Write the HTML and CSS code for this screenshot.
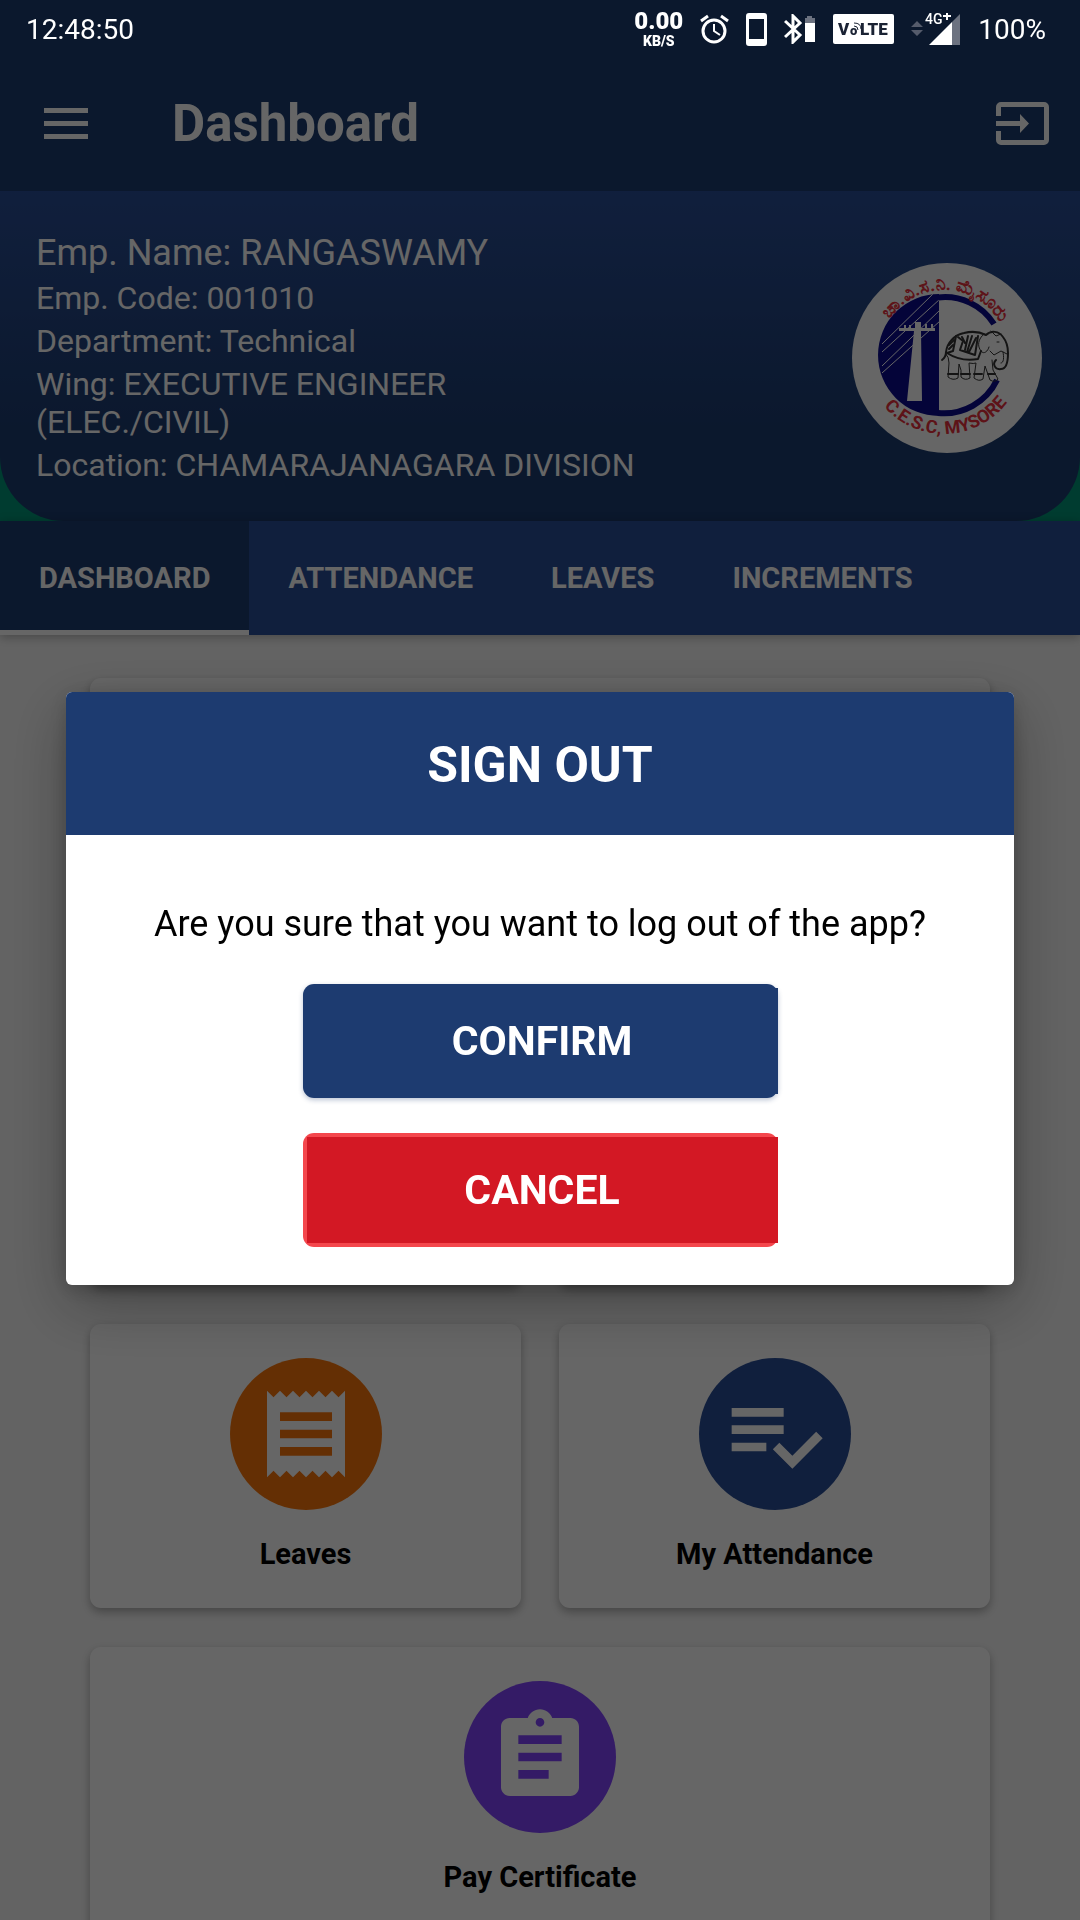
FILE: index.html
```html
<!DOCTYPE html>
<html lang="en">
<head>
    <meta charset="UTF-8">
    <meta name="viewport" content="width=device-width, initial-scale=1.0">
    <title>Dashboard</title>
    <link rel="stylesheet" href="styles.css">
</head>
<body>
    <div class="status-bar">
        <span class="clock">12:48:50</span>
        <div class="status-icons">
            <div class="speed"><span class="speed-value">0.00</span><span class="speed-unit">KB/S</span></div>
            <svg class="alarm" width="29" height="30" viewBox="0 0 29 30" fill="none" stroke="#fff">
                <circle cx="14" cy="17" r="11" stroke-width="3"/>
                <path d="M14 10v7l6 4" stroke-width="2"/>
                <path d="M1 7l7-5M21 2l7 5" stroke-width="3"/>
            </svg>
            <svg width="21" height="33" viewBox="0 0 21 33">
                <path fill="#fff" fill-rule="evenodd" d="M3 0h15a3 3 0 0 1 3 3v27a3 3 0 0 1-3 3H3a3 3 0 0 1-3-3V3a3 3 0 0 1 3-3zm0 6v20h15V6z"/>
            </svg>
            <svg width="32" height="30" viewBox="0 0 32 30">
                <path d="M1 7l15 14-7 7V2l7 7L1 23" fill="none" stroke="#fff" stroke-width="3"/>
                <path fill="#6c7280" d="M23 2h5v2h3v5H21V4h2z"/>
                <path fill="#fff" d="M21 9h10v19H21z"/>
            </svg>
            <svg width="61" height="30" viewBox="0 0 61 30">
                <rect width="61" height="30" rx="2" fill="#fff"/>
                <g fill="#1a2233" font-family="Roboto, sans-serif" font-weight="900">
                    <text x="5" y="21" font-size="17">V</text>
                    <text x="17" y="21" font-size="13">o</text>
                    <text x="27" y="21" font-size="17">LTE</text>
                </g>
                <path d="M21 12q4 0 4 4M21 9q7 0 7 6" fill="none" stroke="#1a2233" stroke-width="1"/>
            </svg>
            <svg width="50" height="34" viewBox="0 0 50 34">
                <path fill="#555b6b" d="M6 9l6 6H0zM6 24l-6-6h12z"/>
                <path fill="#6c7280" d="M49 2v31h-8V10z"/>
                <path fill="#fff" d="M41 10v23H18z"/>
                <path d="M12 0h26v11l-7 5H12z" fill="#0b182d"/>
                <text x="14" y="12" font-size="14" font-weight="500" fill="#fff" font-family="Roboto, sans-serif">4G</text>
                <path d="M36 1v7M32 4h8" stroke="#fff" stroke-width="2"/>
            </svg>
            <span>100%</span>
        </div>
    </div>

    <div class="app">
        <header class="toolbar">
            <button class="icon-button" aria-label="Menu">
                <svg width="44" height="32" viewBox="0 0 44 32" fill="#fff"><path d="M0 0h44v5H0zM0 13h44v5H0zM0 26h44v5H0z"/></svg>
            </button>
            <h1 class="title">Dashboard</h1>
            <button class="icon-button logout" aria-label="Sign out">
                <svg width="53" height="43" viewBox="0 0 53 43">
                    <path d="M2.500 14V5a2.500 2.500 0 0 1 2.500-2.500h43A2.500 2.500 0 0 1 50.500 5v33a2.500 2.500 0 0 1-2.500 2.500H5A2.500 2.500 0 0 1 2.500 38v-9" fill="none" stroke="#fff" stroke-width="5"/>
                    <path d="M0 19h24v-7l9 9.500-9 9.500v-7H0z" fill="#fff"/>
                </svg>
            </button>
        </header>

        <div class="profile-wrap">
            <section class="profile">
                <div class="info">
                    <p class="name">Emp. Name: RANGASWAMY</p>
                    <p>Emp. Code: 001010</p>
                    <p>Department: Technical</p>
                    <p>Wing: EXECUTIVE ENGINEER (ELEC./CIVIL)</p>
                    <p>Location: CHAMARAJANAGARA DIVISION</p>
                </div>
                <svg class="logo" width="190" height="190" viewBox="0 0 190 190">
                    <defs>
                        <path id="arc-top" d="M27 92A65 65 0 0 1 157 92"/>
                        <path id="arc-bottom" d="M13 92A79 79 0 0 0 171 92"/>
                        <clipPath id="half"><path d="M87 31A61 61 0 0 0 87 153z"/></clipPath>
                    </defs>
                    <circle cx="95" cy="95" r="95" fill="#fff"/>
                    <path d="M87 31A61 61 0 0 0 87 153z" fill="#0c0c90"/>
                    <g clip-path="url(#half)" stroke="#fff" stroke-width="1" fill="none">
                        <path d="M30 81L82 30M30 89L88 36M30 103L88 47M30 110L88 58"/>
                    </g>
                    <path d="M63 59h6v6h14v3H69l1 70H55l7-70H47v-3h5v-3h2v3h3v-3h2v3h4zM73 61h2v4h-2zM79 61h2v4h-2z" fill="#fff"/>
                    <path d="M86 34.500A58 58 0 0 1 142 61" fill="none" stroke="#0c0c90" stroke-width="6"/>
                    <path d="M86 150A59 59 0 0 0 145 117" fill="none" stroke="#0c0c90" stroke-width="6"/>
                    <!-- elephant -->
                    <g fill="none" stroke="#333" stroke-width="1" stroke-linecap="round" stroke-linejoin="round">
                        <path stroke-width="2" d="M90 97q4-3 4-8c1-9 8-17 18-19 8-2 16-1 22 2 5-5 13-4 17 2 4 5 5 10 5 16 0 8-1 16-7 16-6 1-9-5-5-9"/>
                        <path d="M151 89c1 5 1 11-2 11M132 71c-6 5-7 12-3 17 3 4 7 0 8-4M138 88l4 4 7-4 6 3M145 79h2M139 68l5 5 5-2"/>
                        <path d="M94 91q3 3 3 9l-1 14q5 4 10 1l1-14q3 6 2 13 4 4 9 1l-1-15q5 1 7 0l-2 15q5 4 9 1l2-13 5 14q5 3 8-1l-5-9-1-10"/>
                        <path stroke-width="2" d="M104 73l-3 15-6 2q14 9 31 6l3-8M106 74l5 4-3 9 15 5 3-19"/>
                        <path stroke-width="2" d="M110 74l3 6M116 73l-3 14M120 73l-5 16M124 75l-7 14M97 82l5-5M97 86l4-4M96 111h10M109 111h9M122 111h8M136 111h7"/>
                    </g>
                    <text class="logo-text kannada" text-anchor="middle"><textPath href="#arc-top" startOffset="51%">ಚಾ.ವಿ.ಸ.ನಿ. ಮೈಸೂರು</textPath></text>
                    <text class="logo-text" text-anchor="middle"><textPath href="#arc-bottom" startOffset="51%">C.E.S.C, MYSORE</textPath></text>
                </svg>
            </section>
        </div>

        <nav class="tabs">
            <a href="#" class="tab active">DASHBOARD</a>
            <a href="#" class="tab">ATTENDANCE</a>
            <a href="#" class="tab">LEAVES</a>
            <a href="#" class="tab">INCREMENTS</a>
        </nav>

        <main class="tiles">
            <div class="tile wide"></div>
            <div class="tile"></div>
            <div class="tile"></div>
            <a href="#" class="tile">
                <span class="circle orange">
                    <svg width="104" height="104" viewBox="0 0 24 24" fill="#fff"><path d="M18 17H6v-2h12v2zm0-4H6v-2h12v2zm0-4H6V7h12v2zM3 22l1.500-1.500L6 22l1.500-1.500L9 22l1.500-1.500L12 22l1.500-1.500L15 22l1.500-1.500L18 22l1.500-1.500L21 22V2l-1.500 1.500L18 2l-1.500 1.500L15 2l-1.500 1.500L12 2l-1.500 1.500L9 2 7.500 3.500 6 2 4.500 3.500 3 2v20z"/></svg>
                </span>
                <span class="label">Leaves</span>
            </a>
            <a href="#" class="tile">
                <span class="circle blue">
                    <svg width="104" height="104" viewBox="0 0 24 24" fill="#fff"><path d="M14 10H2v2h12v-2zm0-4H2v2h12V6zM2 16h8v-2H2v2zm19.500-4.500L23 13l-6.990 7-4.510-4.500L13 14l3.010 3 5.490-5.500z"/></svg>
                </span>
                <span class="label">My Attendance</span>
            </a>
            <a href="#" class="tile wide">
                <span class="circle purple">
                    <svg width="104" height="104" viewBox="0 0 24 24" fill="#fff"><path d="M19 3h-4.180C14.400 1.840 13.300 1 12 1c-1.300 0-2.400.84-2.820 2H5c-1.100 0-2 .9-2 2v14c0 1.100.9 2 2 2h14c1.100 0 2-.9 2-2V5c0-1.100-.9-2-2-2zm-7 0c.55 0 1 .45 1 1s-.45 1-1 1-1-.45-1-1 .45-1 1-1zm2 14H7v-2h7v2zm3-4H7v-2h10v2zm0-4H7V7h10v2z"/></svg>
                </span>
                <span class="label">Pay Certificate</span>
            </a>
        </main>
    </div>

    <div class="overlay">
        <div class="dialog" role="dialog" aria-labelledby="dialog-title">
            <h2 class="dialog-title" id="dialog-title">SIGN OUT</h2>
            <div class="dialog-body">
                <p class="message">Are you sure that you want to log out of the app?</p>
                <button class="dialog-button confirm"><span>CONFIRM</span></button>
                <button class="dialog-button cancel"><span>CANCEL</span></button>
            </div>
        </div>
    </div>
</body>
</html>
```
FILE: styles.css
```css
* {
    box-sizing: border-box;
}
body {
    margin: 0;
    height: 100vh;
    overflow: hidden;
    background: #f8f8f8;
    color: #000;
    font-family: Roboto, "Noto Sans", sans-serif;
}
h1, h2, p {
    margin: 0;
}
a {
    color: inherit;
    text-decoration: none;
}
button {
    padding: 0;
    border: none;
    background: none;
    color: inherit;
    font-family: inherit;
    cursor: pointer;
}
svg {
    display: block;
    flex-shrink: 0;
}

/* system bar, stays bright over the dimmed page */
.status-bar {
    position: fixed;
    top: 0;
    left: 0;
    width: 100%;
    height: 58px;
    padding: 0 34px 0 26px;
    display: flex;
    align-items: center;
    justify-content: space-between;
    color: #fff;
    font-size: 28px;
    z-index: 20;
}
.status-icons {
    display: flex;
    align-items: center;
    gap: 17px;
}
.speed {
    display: flex;
    flex-direction: column;
    align-items: center;
    font-weight: 900;
}
.speed-value {
    font-size: 24px;
    line-height: 24px;
}
.speed-unit {
    font-size: 14px;
    line-height: 17px;
}

.toolbar {
    height: 191px;
    padding: 56px 31px 0 44px;
    background: #1c3c70;
    display: flex;
    align-items: center;
    color: #fff;
}
.icon-button {
    display: flex;
}
.title {
    margin-left: 84px;
    font-size: 51px;
    font-weight: bold;
}
.logout {
    margin-left: auto;
}

.profile-wrap {
    background: #009678;
}
.profile {
    padding: 41px 38px 37px 36px;
    display: flex;
    align-items: center;
    justify-content: space-between;
    background: linear-gradient(#2a4f98, #1c3c70 75%);
    border-radius: 0 0 64px 64px;
    color: #fff;
}
.info {
    width: 60%;
    display: flex;
    flex-direction: column;
    gap: 5px;
    font-size: 32px;
    line-height: 38px;
}
.name {
    font-size: 36px;
    line-height: 42px;
}
.logo-text {
    font-size: 18px;
    font-weight: bold;
    fill: #e8303c;
}
.kannada {
    font-size: 18px;
}

.tabs {
    position: relative;
    height: 114px;
    display: flex;
    background: #2a4e98;
    box-shadow: 0 2px 10px rgba(0, 0, 0, 0.3);
    color: #fff;
    font-size: 29px;
    font-weight: bold;
}
.tab {
    padding: 0 39px;
    display: flex;
    align-items: center;
    border-top: 5px solid transparent;
    border-bottom: 5px solid transparent;
}
.tab.active {
    background: #1c3c70;
    border-top-color: #1c3c70;
    border-bottom-color: #fff;
}

.tiles {
    padding: 43px 90px;
    display: grid;
    grid-template-columns: 1fr 1fr;
    gap: 39px 38px;
}
.tile {
    min-height: 284px;
    padding: 34px 20px;
    display: flex;
    flex-direction: column;
    align-items: center;
    gap: 24px;
    background: #fff;
    border-radius: 11px;
    box-shadow: 0 4px 10px rgba(0, 0, 0, 0.3);
}
.wide {
    grid-column: span 2;
}
.circle {
    width: 152px;
    height: 152px;
    display: flex;
    align-items: center;
    justify-content: center;
    border-radius: 50%;
}
.orange {
    background: #fb770c;
}
.blue {
    background: #2a4e98;
}
.purple {
    background: #8244ff;
}
.label {
    font-size: 29px;
    font-weight: bold;
    line-height: 40px;
}

.overlay {
    position: fixed;
    top: 0;
    right: 0;
    bottom: 0;
    left: 0;
    padding: 56px 66px 0;
    display: flex;
    align-items: center;
    background: rgba(0, 0, 0, 0.6);
    z-index: 10;
}
.dialog {
    width: 100%;
    background: #fff;
    border-radius: 6px;
    overflow: hidden;
    box-shadow: 0 20px 60px rgba(0, 0, 0, 0.3), 0 4px 20px rgba(0, 0, 0, 0.2);
}
.dialog-title {
    padding: 43px 20px 40px;
    background: #1d3b70;
    color: #fff;
    font-size: 50px;
    font-weight: bold;
    line-height: 60px;
    text-align: center;
}
.dialog-body {
    padding: 64px 20px 38px;
    display: flex;
    flex-direction: column;
    align-items: center;
    gap: 35px;
}
.message {
    font-size: 36px;
    line-height: 50px;
}
.dialog-button {
    width: 475px;
    max-width: 100%;
    padding: 4px 0 4px 4px;
    border-radius: 11px;
    color: #fff;
    font-size: 41px;
    font-weight: bold;
}
.dialog-button span {
    display: block;
    line-height: 106px;
}
.confirm {
    background: #1d3b70;
    box-shadow: 0 2px 5px rgba(29, 59, 112, 0.3);
}
.confirm span {
    background: #1d3b70;
}
.cancel {
    background: #f4474d;
}
.cancel span {
    background: #d31824;
}
```
